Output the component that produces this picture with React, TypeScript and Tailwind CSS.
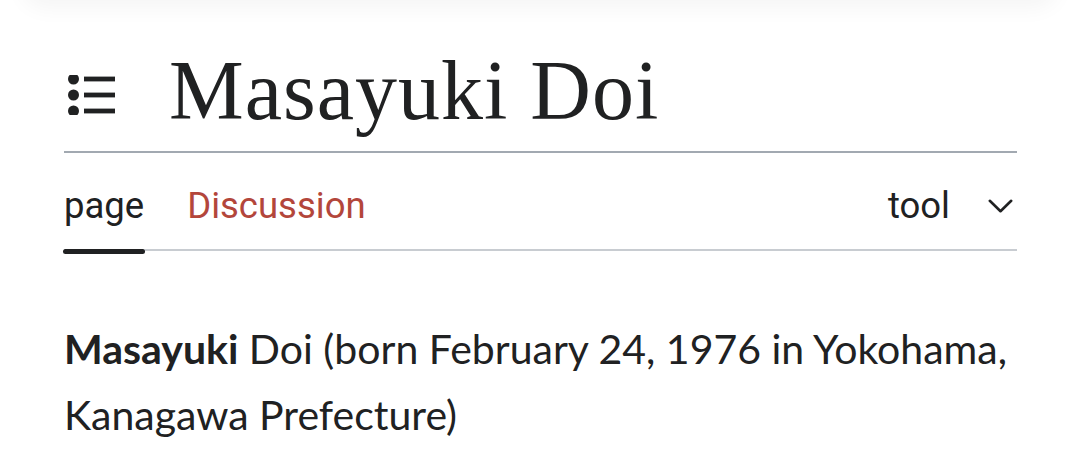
import React from "react";

// list-style contents toggle
function ContentsIcon() {
  return (
    <svg width="50" height="40" viewBox="0 0 50 40" className="text-[#202122]">
      <circle cx="7.5" cy="4" r="5.5" fill="currentColor" />
      <circle cx="7.5" cy="20" r="5.5" fill="currentColor" />
      <circle cx="7.5" cy="36" r="5.5" fill="currentColor" />
      <rect x="18" y="1.6" width="31" height="4.8" fill="currentColor" />
      <rect x="18" y="17.6" width="31" height="4.8" fill="currentColor" />
      <rect x="18" y="33.6" width="31" height="4.8" fill="currentColor" />
    </svg>
  );
}

function Chevron() {
  return (
    <svg width="25" height="15" viewBox="0 0 25 15" fill="none">
      <polyline
        points="1.8,1.8 12.5,12.2 23.2,1.8"
        stroke="#202122"
        strokeWidth="2.6"
        strokeLinecap="round"
        strokeLinejoin="round"
      />
    </svg>
  );
}

export default function App() {
  return (
    <div className="w-[1080px] h-[472px] bg-white overflow-hidden relative">
      {/* header shadow from above */}
      <div className="absolute left-[30px] right-[30px] top-[-30px] h-[30px] rounded-[40px] shadow-[0_0_22px_8px_rgba(0,0,0,0.045)]" />

      <div className="pl-[64px] pr-[63px]">
        {/* title row */}
        <div className="flex items-center pt-[49px] pb-[18px] border-b-2 border-[#a2a9b1]">
          <div className="w-[50px] mt-[7px] ml-[2px] flex items-center">
            <ContentsIcon />
          </div>
          <h1
            className="ml-[53px] text-[84px] leading-none tracking-[1px] text-[#202122]"
            style={{ fontFamily: '"Liberation Serif", "DejaVu Serif", serif' }}
          >
            Masayuki Doi
          </h1>
        </div>

        {/* tabs */}
        <div
          className="flex items-center justify-between pt-[31px] pb-[21px] border-b-2 border-[#c8ccd1] text-[36.5px] leading-[1.2]"
          style={{ fontFamily: "Roboto, sans-serif" }}
        >
          <div className="flex items-center gap-[43px]">
            <span className="relative text-[#202122]">
              page
              <span className="absolute left-[-1px] right-[-1px] bottom-[-26px] h-[5px] rounded-[3px] bg-[#202122]" />
            </span>
            <span className="text-[#b3463b]">Discussion</span>
          </div>
          <div className="flex items-center gap-[38px] pr-[4px] text-[#202122]">
            <span>tool</span>
            <span className="mt-[2px]">
              <Chevron />
            </span>
          </div>
        </div>

        {/* lead paragraph */}
        <p
          className="mt-[65px] text-[41px] leading-[66px] text-[#202122]"
          style={{ fontFamily: "Lato, sans-serif" }}
        >
          <b className="font-bold">Masayuki</b> Doi (born February 24, 1976 in Yokohama, Kanagawa Prefecture)
        </p>
      </div>
    </div>
  );
}
